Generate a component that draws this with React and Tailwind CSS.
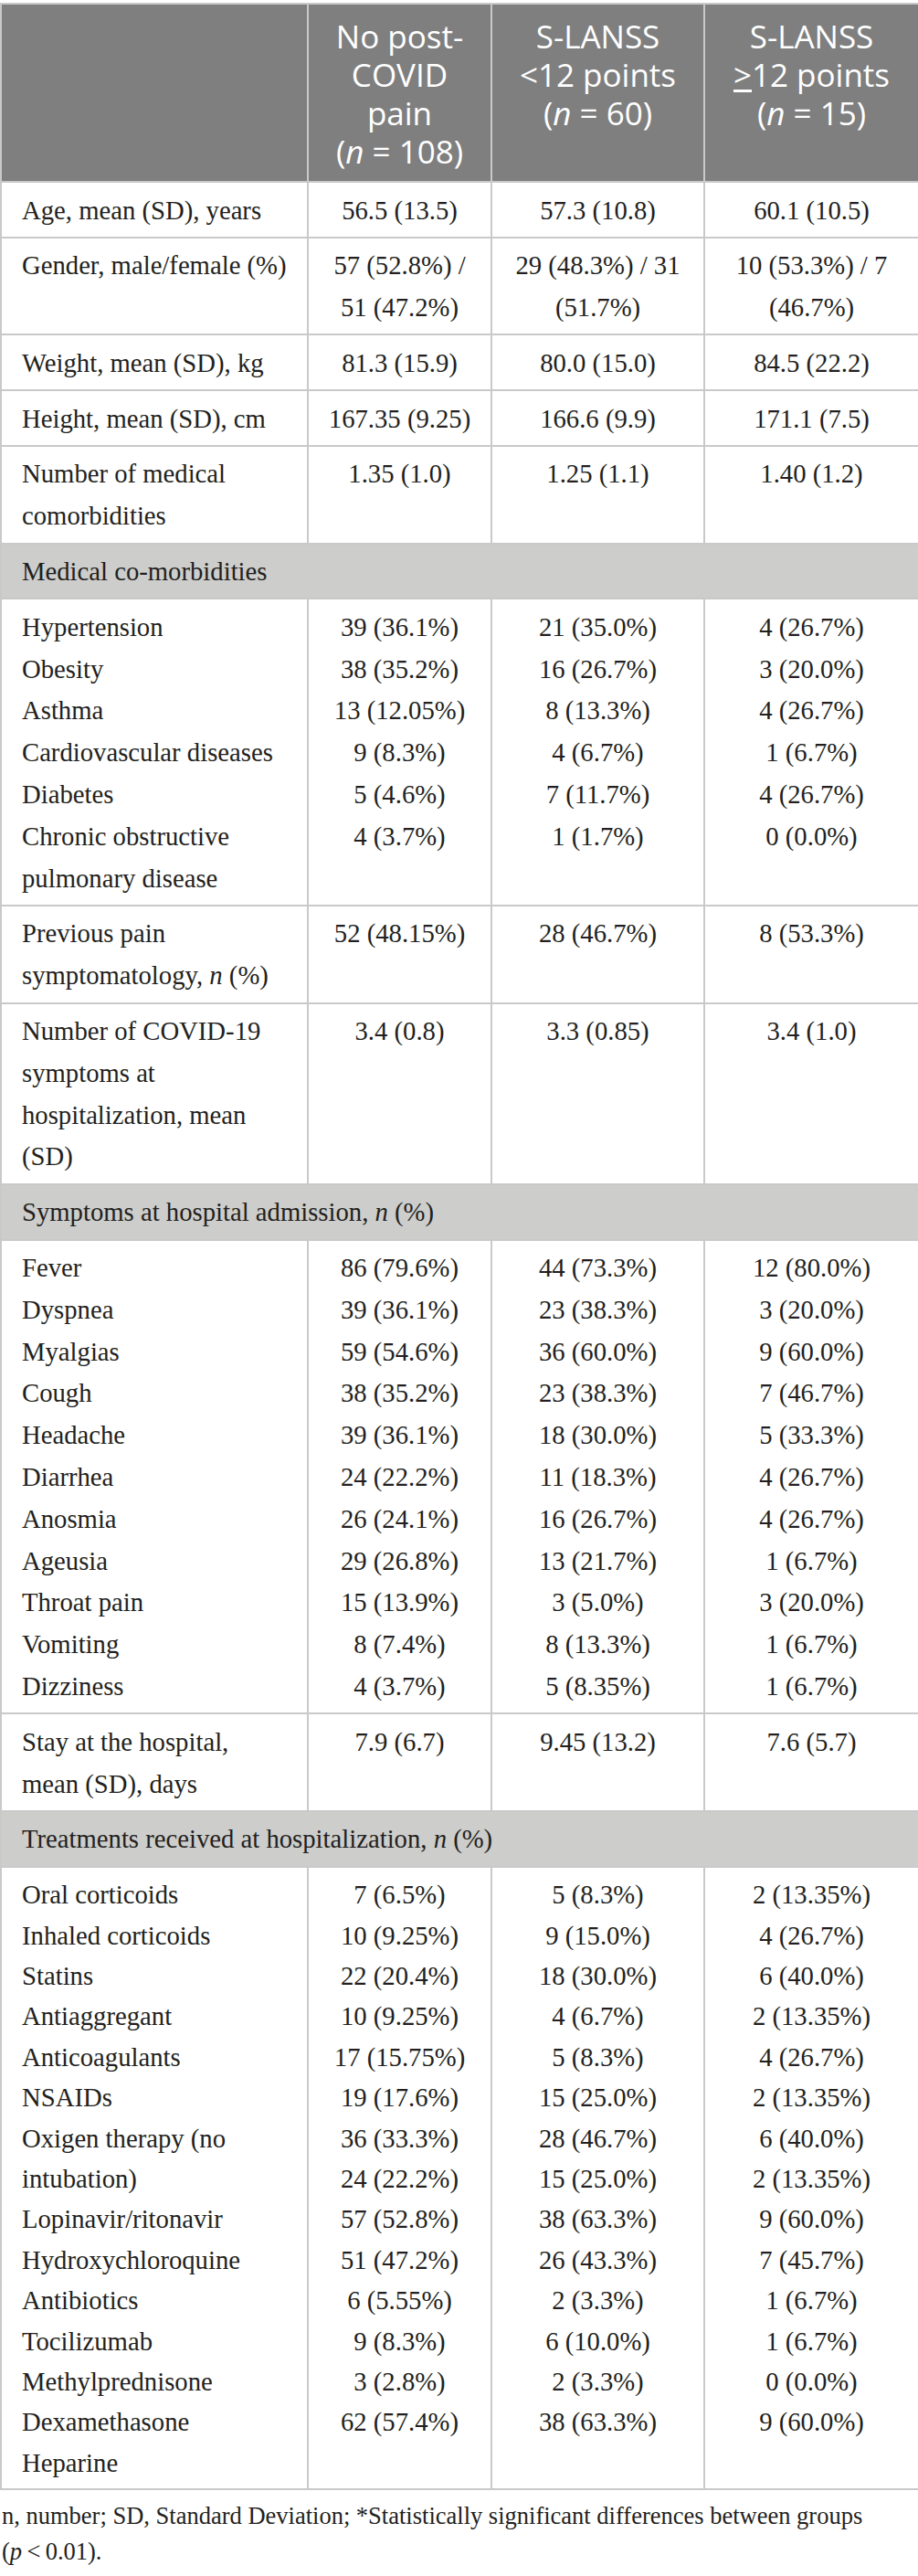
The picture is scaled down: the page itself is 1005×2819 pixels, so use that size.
import React from 'react';

const serif = { fontFamily: '"Liberation Serif", "Times New Roman", serif' };

const rows = [
  { label: ['Age, mean (SD), years'], cols: [['56.5 (13.5)'], ['57.3 (10.8)'], ['60.1 (10.5)']] },
  {
    label: ['Gender, male/female (%)'],
    cols: [
      ['57 (52.8%) /', '51 (47.2%)'],
      ['29 (48.3%) / 31', '(51.7%)'],
      ['10 (53.3%) / 7', '(46.7%)'],
    ],
  },
  { label: ['Weight, mean (SD), kg'], cols: [['81.3 (15.9)'], ['80.0 (15.0)'], ['84.5 (22.2)']] },
  { label: ['Height, mean (SD), cm'], cols: [['167.35 (9.25)'], ['166.6 (9.9)'], ['171.1 (7.5)']] },
  { label: ['Number of medical', 'comorbidities'], cols: [['1.35 (1.0)'], ['1.25 (1.1)'], ['1.40 (1.2)']] },
  { section: 'Medical co-morbidities' },
  {
    label: ['Hypertension', 'Obesity', 'Asthma', 'Cardiovascular diseases', 'Diabetes', 'Chronic obstructive', 'pulmonary disease'],
    cols: [
      ['39 (36.1%)', '38 (35.2%)', '13 (12.05%)', '9 (8.3%)', '5 (4.6%)', '4 (3.7%)'],
      ['21 (35.0%)', '16 (26.7%)', '8 (13.3%)', '4 (6.7%)', '7 (11.7%)', '1 (1.7%)'],
      ['4 (26.7%)', '3 (20.0%)', '4 (26.7%)', '1 (6.7%)', '4 (26.7%)', '0 (0.0%)'],
    ],
  },
  {
    label: ['Previous pain', <>symptomatology, <i>n</i> (%)</>],
    cols: [['52 (48.15%)'], ['28 (46.7%)'], ['8 (53.3%)']],
  },
  {
    label: ['Number of COVID-19', 'symptoms at', 'hospitalization, mean', '(SD)'],
    cols: [['3.4 (0.8)'], ['3.3 (0.85)'], ['3.4 (1.0)']],
  },
  { section: <>Symptoms at hospital admission, <i>n</i> (%)</> },
  {
    label: ['Fever', 'Dyspnea', 'Myalgias', 'Cough', 'Headache', 'Diarrhea', 'Anosmia', 'Ageusia', 'Throat pain', 'Vomiting', 'Dizziness'],
    cols: [
      ['86 (79.6%)', '39 (36.1%)', '59 (54.6%)', '38 (35.2%)', '39 (36.1%)', '24 (22.2%)', '26 (24.1%)', '29 (26.8%)', '15 (13.9%)', '8 (7.4%)', '4 (3.7%)'],
      ['44 (73.3%)', '23 (38.3%)', '36 (60.0%)', '23 (38.3%)', '18 (30.0%)', '11 (18.3%)', '16 (26.7%)', '13 (21.7%)', '3 (5.0%)', '8 (13.3%)', '5 (8.35%)'],
      ['12 (80.0%)', '3 (20.0%)', '9 (60.0%)', '7 (46.7%)', '5 (33.3%)', '4 (26.7%)', '4 (26.7%)', '1 (6.7%)', '3 (20.0%)', '1 (6.7%)', '1 (6.7%)'],
    ],
  },
  {
    label: ['Stay at the hospital,', 'mean (SD), days'],
    cols: [['7.9 (6.7)'], ['9.45 (13.2)'], ['7.6 (5.7)']],
  },
  { section: <>Treatments received at hospitalization, <i>n</i> (%)</> },
  {
    tight: true,
    label: [
      'Oral corticoids', 'Inhaled corticoids', 'Statins', 'Antiaggregant', 'Anticoagulants', 'NSAIDs',
      'Oxigen therapy (no', 'intubation)', 'Lopinavir/ritonavir', 'Hydroxychloroquine', 'Antibiotics',
      'Tocilizumab', 'Methylprednisone', 'Dexamethasone', 'Heparine',
    ],
    cols: [
      ['7 (6.5%)', '10 (9.25%)', '22 (20.4%)', '10 (9.25%)', '17 (15.75%)', '19 (17.6%)', '36 (33.3%)', '24 (22.2%)', '57 (52.8%)', '51 (47.2%)', '6 (5.55%)', '9 (8.3%)', '3 (2.8%)', '62 (57.4%)'],
      ['5 (8.3%)', '9 (15.0%)', '18 (30.0%)', '4 (6.7%)', '5 (8.3%)', '15 (25.0%)', '28 (46.7%)', '15 (25.0%)', '38 (63.3%)', '26 (43.3%)', '2 (3.3%)', '6 (10.0%)', '2 (3.3%)', '38 (63.3%)'],
      ['2 (13.35%)', '4 (26.7%)', '6 (40.0%)', '2 (13.35%)', '4 (26.7%)', '2 (13.35%)', '6 (40.0%)', '2 (13.35%)', '9 (60.0%)', '7 (45.7%)', '1 (6.7%)', '1 (6.7%)', '0 (0.0%)', '9 (60.0%)'],
    ],
  },
];

const Lines = ({ lines }) => (
  <>
    {lines.map((line, i) => (
      <div key={i} className="whitespace-nowrap">{line}</div>
    ))}
  </>
);

export default function App() {
  const td = 'border-2 border-[#c9c9c9] align-top pt-[7.5px] pb-[5.5px]';
  const th = 'border-2 border-[#c9c9c9] align-top pt-[14px] pb-[11px] text-center font-normal';

  return (
    <div className="w-[1005px] bg-white pt-[3px] text-[#231f20]">
      <table className="w-full border-collapse table-fixed text-[28.7px]" style={serif}>
        <colgroup>
          <col className="w-[336px]" />
          <col className="w-[201px]" />
          <col className="w-[233px]" />
          <col className="w-[235px]" />
        </colgroup>
        <thead>
          <tr className="bg-[#7f7f7f] text-white text-[35px] leading-[42px] font-['Open_Sans',sans-serif]">
            <th className={th}></th>
            <th className={th}>
              No post-<br />COVID<br />pain<br />(<i>n</i> = 108)
            </th>
            <th className={th}>
              S-LANSS<br />&lt;12 points<br />(<i>n</i> = 60)
            </th>
            <th className={th}>
              S-LANSS<br /><span className="underline underline-offset-[3px]">&gt;</span>12 points<br />(<i>n</i> = 15)
            </th>
          </tr>
        </thead>
        <tbody>
          {rows.map((row, i) =>
            row.section ? (
              <tr key={i} className="bg-[#cdcdcb]">
                <td colSpan={4} className={`${td} leading-[45.8px] px-[22px]`}>{row.section}</td>
              </tr>
            ) : (
              <tr key={i} className={row.tight ? 'leading-[44.4px]' : 'leading-[45.8px]'}>
                <td className={`${td} px-[22px]`}>
                  <Lines lines={row.label} />
                </td>
                {row.cols.map((col, j) => (
                  <td key={j} className={`${td} text-center`}>
                    <Lines lines={col} />
                  </td>
                ))}
              </tr>
            )
          )}
        </tbody>
      </table>
      <p className="mt-[9px] text-[26.5px] leading-[39px] pl-[2px]" style={serif}>
        n, number; SD, Standard Deviation; *Statistically significant differences between groups
        <br />(<i>p</i>{'\u2009'}&lt;{'\u2009'}0.01).
      </p>
    </div>
  );
}
